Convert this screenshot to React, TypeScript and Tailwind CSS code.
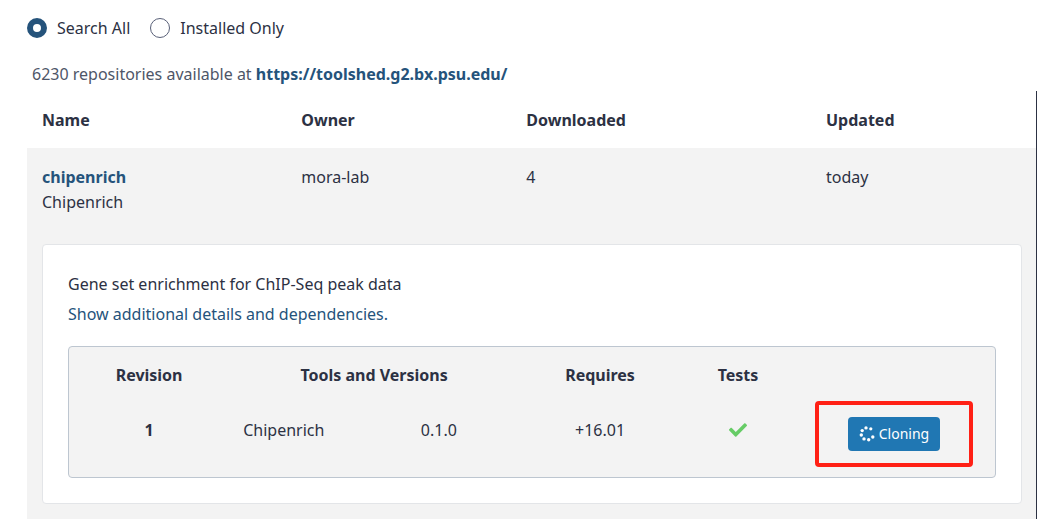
import { useState } from "react";

const scopes = ["Search All", "Installed Only"];

function Spinner() {
  return (
    <svg viewBox="0 0 16 16" className="size-4 shrink-0" fill="#fff" aria-hidden="true">
      <circle cx="7" cy="1.9" r="1.7" />
      <circle cx="11.8" cy="2.8" r="1.6" />
      <circle cx="3.2" cy="4.6" r="1.7" />
      <circle cx="2.3" cy="9" r="1.7" />
      <circle cx="5" cy="12.9" r="1.7" />
      <circle cx="9.7" cy="13.7" r="1.7" />
      <circle cx="13.8" cy="11" r="1.7" />
    </svg>
  );
}

function Check() {
  return (
    <svg viewBox="0 0 512 512" className="size-[18px]" fill="#66cc66" role="img" aria-label="Passed">
      <path d="M173.898 439.404l-166.4-166.4c-9.997-9.997-9.997-26.206 0-36.204l36.203-36.204c9.997-9.998 26.207-9.998 36.204 0L192 312.69 432.095 72.596c9.997-9.997 26.207-9.997 36.204 0l36.203 36.204c9.997 9.997 9.997 26.206 0 36.204l-294.4 294.401c-9.998 9.997-26.207 9.997-36.204-.001z" />
    </svg>
  );
}

function Revisions() {
  return (
    <div className="mt-5 rounded border border-[#bdc6d0] bg-[#f3f3f3] pb-[10px]">
      <table className="w-full table-fixed text-center">
        <colgroup>
          <col className="w-[17.3%]" />
          <col className="w-[20.7%]" />
          <col className="w-[10.6%]" />
          <col className="w-[17.5%]" />
          <col className="w-[12.3%]" />
          <col className="w-[21.6%]" />
        </colgroup>
        <thead>
          <tr className="h-[54px]">
            <th className="pt-0.5">Revision</th>
            <th colSpan={2} className="pt-0.5">Tools and Versions</th>
            <th className="pt-0.5">Requires</th>
            <th className="pt-0.5">Tests</th>
            <td></td>
          </tr>
        </thead>
        <tbody>
          <tr className="h-[66px]">
            <th scope="row" className="pb-2">1</th>
            <td className="pb-2 pl-3.5 text-left">Chipenrich</td>
            <td className="pb-2 text-left">0.1.0</td>
            <td className="pb-2">+16.01</td>
            <td className="pb-2">
              <div className="flex justify-center"><Check /></div>
            </td>
            <td>
              <div className="flex justify-center">
                <div className="-ml-0.5 rounded border-4 border-[#ff2015] px-[29px] py-3">
                  <button className="flex h-[34px] items-center gap-1 rounded bg-[#2077b3] px-[11px] text-sm text-white">
                    <Spinner />
                    Cloning
                  </button>
                </div>
              </div>
            </td>
          </tr>
        </tbody>
      </table>
    </div>
  );
}

export default function App() {
  const [scope, setScope] = useState(scopes[0]);
  return (
    <main className="bg-white pt-4 pr-px pb-px pl-[27px] font-['Noto_Sans','Open_Sans',sans-serif] text-base leading-6 text-[#2c3143]">
      <div className="flex gap-5">
        {scopes.map((s) => (
          <label key={s} className="flex items-center gap-2.5">
            <input
              type="radio"
              name="scope"
              checked={scope === s}
              onChange={() => setScope(s)}
              className="size-5 appearance-none rounded-full border border-[#596078] bg-white checked:border-[6px] checked:border-[#25537b]"
            />
            {s}
          </label>
        ))}
      </div>
      <p className="mt-[22px] pl-[5px] text-[#4e5668]">
        6230 repositories available at{" "}
        <a href="https://toolshed.g2.bx.psu.edu/" className="font-bold text-[#25537b]">
          https://toolshed.g2.bx.psu.edu/
        </a>
      </p>
      <div className="mt-[5px] border-r border-[#2c3143]">
        <table className="w-full table-fixed text-left">
          <colgroup>
            <col className="w-[25.7%]" />
            <col className="w-[22.3%]" />
            <col className="w-[29.7%]" />
            <col className="w-[22.3%]" />
          </colgroup>
          <thead>
            <tr className="h-[57px]">
              <th className="px-[15px]">Name</th>
              <th className="px-[15px]">Owner</th>
              <th className="px-[15px]">Downloaded</th>
              <th className="px-[15px]">Updated</th>
            </tr>
          </thead>
          <tbody className="bg-[#f3f3f3]">
            <tr className="h-24 align-top leading-[25px]">
              <td className="px-[15px] pt-[17px]">
                <a href="#chipenrich" className="font-bold text-[#25537b]">chipenrich</a>
                <div>Chipenrich</div>
              </td>
              <td className="px-[15px] pt-[17px]">mora-lab</td>
              <td className="px-[15px] pt-[17px]">4</td>
              <td className="px-[15px] pt-[17px]">today</td>
            </tr>
            <tr>
              <td colSpan={4} className="pr-3.5 pb-[15px] pl-[15px]">
                <section className="rounded border border-[#e3e5e8] bg-white p-[25px]">
                  <p className="mt-0.5">Gene set enrichment for ChIP-Seq peak data</p>
                  <a href="#details" className="mt-1.5 block text-[#25537b]">
                    Show additional details and dependencies.
                  </a>
                  <Revisions />
                </section>
              </td>
            </tr>
          </tbody>
        </table>
      </div>
    </main>
  );
}
